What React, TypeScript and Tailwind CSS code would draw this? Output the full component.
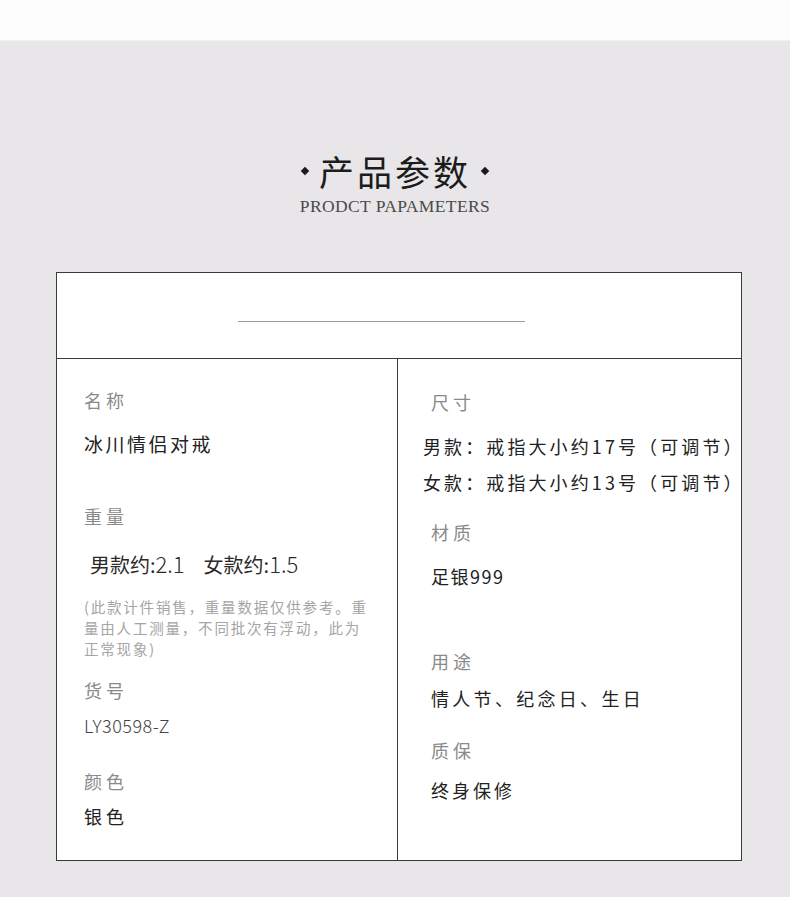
export default function App() {
  const cjk = { fontFamily: '"Noto Sans CJK SC", "Noto Sans", sans-serif' };

  return (
    <div className="w-[790px] h-[897px] bg-[#e8e6e8] overflow-hidden" style={cjk}>
      <div className="h-[41px] bg-[#fdfdfd] border-b border-[#f2f1f2]" />

      <div className="flex flex-col items-center pt-[110px]">
        <div className="flex items-center gap-[11px]">
          <span className="w-[6px] h-[6px] rotate-45 bg-[#1a1a1a]" />
          <h1 className="text-[35px] leading-[40px] text-[#1c1c1c] tracking-[3px]">产品参数</h1>
          <span className="w-[6px] h-[6px] rotate-45 bg-[#1a1a1a]" />
        </div>
        <p
          className="mt-[5px] text-[17.5px] leading-[20px] tracking-[0.4px] text-[#4a4a4a]"
          style={{ fontFamily: '"Liberation Serif", serif' }}
        >
          PRODCT PAPAMETERS
        </p>
      </div>

      <div className="ml-[56px] mt-[56px] w-[686px] h-[589px] bg-white border-[1.5px] border-[#3a3a3a] flex flex-col">
        <div className="h-[86px] pt-[48px] pl-[181px] border-b-[1.5px] border-[#3a3a3a]">
          <div className="w-[287px] h-px bg-[#9a9a9a]" />
        </div>

        <div className="flex flex-1">
          {/* left column */}
          <div className="w-[341px] shrink-0 border-r-[1.5px] border-[#3a3a3a] pl-[27px] pt-[29px] flex flex-col">
            <p className="text-[18px] leading-[24px] tracking-[4px] text-[#8a8a8a]">名称</p>
            <p className="mt-[19px] text-[19px] leading-[26px] tracking-[2.5px] text-[#222]">冰川情侣对戒</p>
            <p className="mt-[47px] text-[18px] leading-[24px] tracking-[4px] text-[#8a8a8a]">重量</p>
            <p className="mt-[21px] pl-[6px] text-[20px] leading-[28px] text-[#2a2a2a] flex items-baseline">
              <span>男款约:</span>
              <span className="text-[22px] font-light">2.1</span>
              <span className="ml-[19px]">女款约:</span>
              <span className="text-[22px] font-light">1.5</span>
            </p>
            <p className="mt-[17px] text-[14.5px] leading-[21px] tracking-[1.8px] text-[#a5a5a5] whitespace-nowrap">
              (此款计件销售，重量数据仅供参考。重
              <br />
              量由人工测量，不同批次有浮动，此为
              <br />
              正常现象)
            </p>
            <p className="mt-[19px] text-[18px] leading-[24px] tracking-[4px] text-[#8a8a8a]">货号</p>
            <p className="mt-[11px] text-[18px] leading-[24px] tracking-[0.5px] text-[#444] font-light">LY30598-Z</p>
            <p className="mt-[32px] text-[18px] leading-[24px] tracking-[4px] text-[#8a8a8a]">颜色</p>
            <p className="mt-[11px] text-[18px] leading-[24px] tracking-[4px] text-[#222]">银色</p>
          </div>

          {/* right column */}
          <div className="flex-1 min-w-0 pl-[33px] pt-[31px] flex flex-col">
            <p className="text-[18px] leading-[24px] tracking-[4px] text-[#8a8a8a]">尺寸</p>
            <div className="mt-[14px] ml-[-8px] text-[18px] leading-[36px] tracking-[3.1px] text-[#222] whitespace-nowrap">
              <p>男款：戒指大小约17号（可调节）</p>
              <p>女款：戒指大小约13号（可调节）</p>
            </div>
            <p className="mt-[20px] text-[18px] leading-[24px] tracking-[4px] text-[#8a8a8a]">材质</p>
            <p className="mt-[20px] text-[18px] leading-[24px] tracking-[1.5px] text-[#222]">足银999</p>
            <p className="mt-[61px] text-[18px] leading-[24px] tracking-[4px] text-[#8a8a8a]">用途</p>
            <p className="mt-[13px] text-[18px] leading-[24px] tracking-[3.3px] text-[#222]">情人节、纪念日、生日</p>
            <p className="mt-[28px] text-[18px] leading-[24px] tracking-[4px] text-[#8a8a8a]">质保</p>
            <p className="mt-[16px] text-[18px] leading-[24px] tracking-[3px] text-[#222]">终身保修</p>
          </div>
        </div>
      </div>
    </div>
  );
}
